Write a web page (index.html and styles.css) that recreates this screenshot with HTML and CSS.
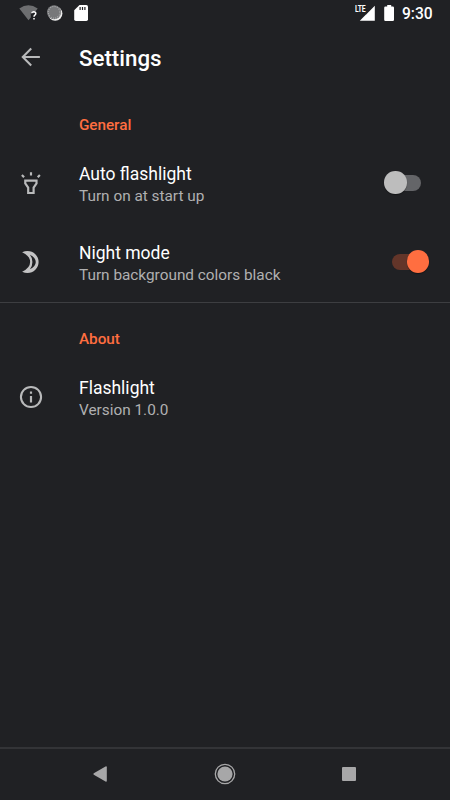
FILE: index.html
```html
<!DOCTYPE html>
<html lang="en">
<head>
<meta charset="utf-8">
<title>Settings</title>
<link rel="stylesheet" href="styles.css">
</head>
<body>
<div class="screen">
  <div class="status">
    <svg class="status-left" width="72" height="20" viewBox="18 4 72 20">
      <path d="M19.3 8.6Q28.4 1.8 37.7 8.6L35.8 11H32L30.8 13V17.4L28.5 20.2Z" fill="#6d6e70"/>
      <path d="M31.7 13.3Q31.8 11.7 33.8 11.7Q35.8 11.8 35.8 13.4Q35.8 14.3 34.8 15.1Q34 15.7 34 16.7M34 18.1V19.6" fill="none" stroke="#fff" stroke-width="1.5"/>
      <circle cx="55.2" cy="13.6" r="7.2" fill="#eee"/>
      <circle cx="54.1" cy="12.3" r="7" fill="#77787a"/>
      <circle cx="54.1" cy="12.3" r="5.9" fill="none" stroke="#aaabad" stroke-width="1.2" stroke-dasharray="1 1.3"/>
      <path d="M79.5 5H86.3Q88 5 88 6.7V19.3Q88 21 86.3 21H75.9Q74.2 21 74.2 19.3V10.2Z" fill="#fff"/>
      <path d="M80.1 7V10M82.5 7V10M84.9 7V10" stroke="#222326" stroke-width="1.2"/>
    </svg>
    <div class="status-right">
      <span class="lte">LTE</span>
      <svg width="49" height="20" viewBox="353 4 49 20">
        <path d="M374.8 5.8V20.8H359.8L366 14.6H366.4V14.2Z" fill="#fff"/>
        <path d="M387.2 5H391.2V6.6H392.8Q394 6.6 394 7.8V19.8Q394 21 392.8 21H385.4Q384.2 21 384.2 19.8V7.8Q384.2 6.6 385.4 6.6H387.2Z" fill="#fff"/>
      </svg>
      <span class="clock">9:30</span>
    </div>
  </div>

  <header class="appbar">
    <svg class="icon" viewBox="0 0 24 24"><path d="M20.2 12H4.8M12.2 4.2L4.4 12L12.2 19.8" fill="none" stroke="#b9babb" stroke-width="1.9"/></svg>
    <h1>Settings</h1>
  </header>

  <h2 class="section">General</h2>
  <div class="row">
    <svg class="icon" viewBox="0 0 24 24">
      <path d="M6.7 9.8H17.1V12.3L14.4 16.2V21.2H9.4V16.2L6.7 12.3Z" fill="none" stroke="#b9babb" stroke-width="2"/>
      <path d="M12 2V5M3.6 4.7L5.6 6.8M20.2 4.7L18.2 6.8" stroke="#b9babb" stroke-width="2"/>
    </svg>
    <div class="text"><div class="title">Auto flashlight</div><div class="sub">Turn on at start up</div></div>
    <div class="switch off"></div>
  </div>
  <div class="row">
    <svg class="icon" viewBox="0 0 24 24">
      <path d="M3.8 3.1Q6.4 1.8 8.8 1.8A10.2 10.2 0 0 1 8.8 22.2Q6.4 22.2 3.8 20.9Q11.2 17.6 11.2 12Q11.2 6.4 3.8 3.1Z" fill="#c3c3c4"/>
      <path d="M11 5.3Q16.4 8 16.4 12Q16.4 16 11 18.7Q13.3 16 13.3 12Q13.3 8 11 5.3Z" fill="#202124"/>
    </svg>
    <div class="text"><div class="title">Night mode</div><div class="sub">Turn background colors black</div></div>
    <div class="switch on"></div>
  </div>

  <h2 class="section about">About</h2>
  <div class="row">
    <svg class="icon" viewBox="0 0 24 24">
      <circle cx="12" cy="12" r="9.3" fill="none" stroke="#b9babb" stroke-width="1.9"/>
      <path d="M12 7V9M12 11V17" stroke="#b9babb" stroke-width="2"/>
    </svg>
    <div class="text"><div class="title">Flashlight</div><div class="sub">Version 1.0.0</div></div>
  </div>

  <nav class="nav">
    <svg viewBox="0 0 24 24"><path d="M4.8 11.3L16.5 4.4Q17.8 3.8 17.8 5.2V18.8Q17.8 20.2 16.5 19.6L4.8 12.7Q3.8 12 4.8 11.3Z" fill="#a7a7a8"/></svg>
    <svg viewBox="0 0 24 24"><circle cx="12" cy="12" r="9.7" fill="none" stroke="#a7a7a8" stroke-width="1.3"/><circle cx="12" cy="12" r="7.6" fill="#a7a7a8"/></svg>
    <svg viewBox="0 0 24 24"><rect x="5" y="5" width="14" height="14" rx="1" fill="#a7a7a8"/></svg>
  </nav>
</div>
</body>
</html>
```

FILE: styles.css
```css
* { box-sizing: border-box; }
body { margin: 0; background: #202124; font-family: Roboto, sans-serif; }
.screen { width: 450px; height: 800px; display: flex; flex-direction: column; overflow: hidden; color: #fff; }
.status { height: 28px; padding: 4px 13px 0 18px; display: flex; justify-content: space-between; flex: none; }
.status-right { display: flex; align-items: flex-start; position: relative; }
.lte { position: absolute; left: 2px; top: 0; font-size: 9.5px; line-height: 9px; font-weight: 700; letter-spacing: -.3px; transform: scaleX(.72); transform-origin: left; }
.clock { width: 35px; font-size: 15.6px; line-height: 20px; font-weight: 500; white-space: nowrap; }
.appbar { height: 60px; padding-left: 18px; display: flex; align-items: center; flex: none; }
.icon { width: 26px; height: 26px; margin-right: 35px; flex: none; }
.appbar .icon { margin-bottom: 2px; }
h1 { margin: 0; font-size: 22.3px; line-height: 26px; font-weight: 500; }
.section { margin: 27px 0 8px 79px; height: 20px; font-size: 15.3px; line-height: 20px; font-weight: 500; color: #ff6e40; flex: none; letter-spacing: -.05px; }
.row { height: 79px; padding: 0 21px 0 18px; display: flex; align-items: center; flex: none; }
.text { flex: 1; padding-top: 5px; }
.title { font-size: 17.5px; line-height: 22px; }
.sub { font-size: 15.35px; line-height: 22px; color: #b0b0b1; }
.switch { width: 37px; height: 23px; display: flex; align-items: center; position: relative; }
.switch::before { content: ""; width: 29px; height: 16px; border-radius: 8px; }
.switch::after { content: ""; position: absolute; width: 22.5px; height: 22.5px; top: .25px; border-radius: 50%; box-shadow: 0 1px 1px #0006; }
.off { margin-right: 8px; justify-content: flex-end; }
.off::before { background: #646568; }
.off::after { left: 0; background: #bdbdbd; }
.on::before { background: #633529; }
.on::after { right: 0; background: #ff6e40; }
.about { margin-top: 0; padding-top: 28px; height: 48px; position: relative; }
.about::before { content: ""; position: absolute; left: -79px; top: 1px; width: 450px; height: 1px; background: #3d3e41; }
.about + .row .text { padding-top: 4px; }
.nav { margin-top: auto; height: 53px; border-top: 2px solid #333437; padding: 0 89px 2px; display: flex; justify-content: space-between; align-items: center; flex: none; }
.nav svg { width: 24px; height: 24px; }
```
